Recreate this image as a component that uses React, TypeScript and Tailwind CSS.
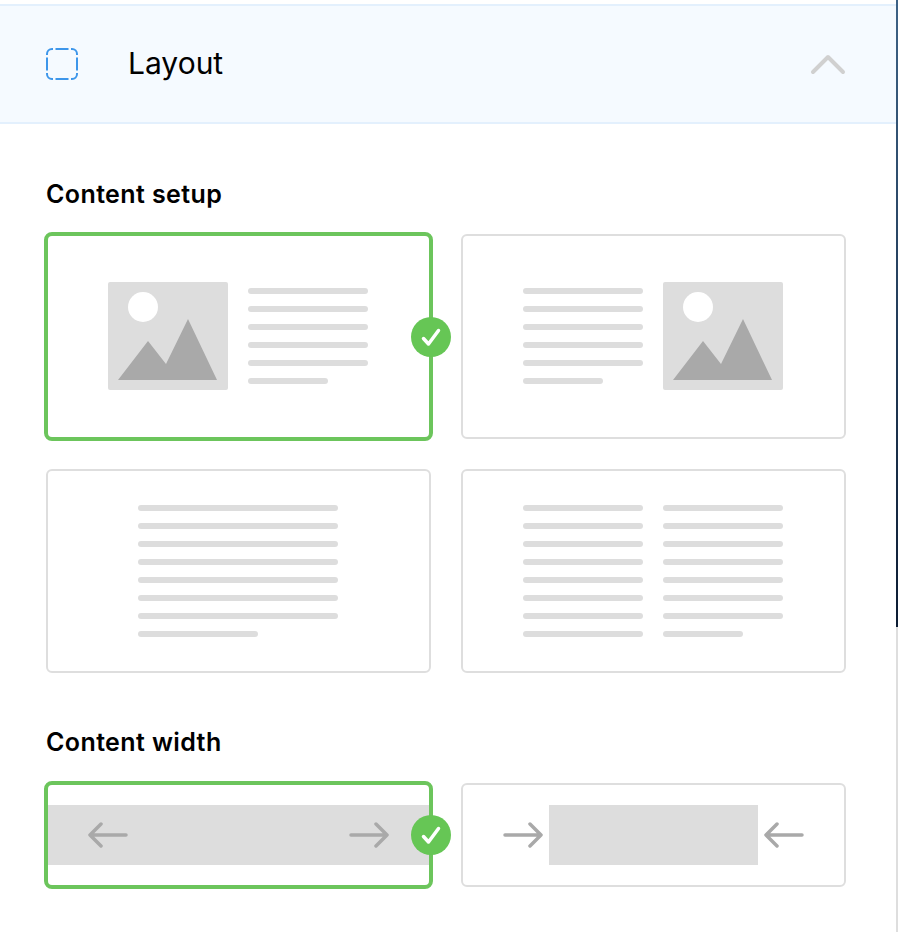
function Check() {
  return (
    <div className="absolute right-[-22px] top-1/2 flex h-10 w-10 -translate-y-1/2 items-center justify-center rounded-full bg-[#66c655]">
      <svg width="22" height="22" viewBox="0 0 22 22" fill="none">
        <path d="M3.5 12.5 L8.5 18 L18.5 4.5" stroke="#fff" strokeWidth="3.5" strokeLinecap="round" strokeLinejoin="round" />
      </svg>
    </div>
  )
}

function Picture() {
  return (
    <svg width="120" height="108" viewBox="0 0 120 108" className="shrink-0">
      <rect width="120" height="108" rx="2" fill="#ddd" />
      <circle cx="35" cy="25" r="15" fill="#fff" />
      <path d="M10 98 L40 59 L58 82 L80 37 L109 98 Z" fill="#a9a9a9" />
    </svg>
  )
}

function Lines({ count, width, last }: { count: number; width: string; last: string }) {
  return (
    <div className={`flex flex-col gap-3 ${width}`}>
      {Array.from({ length: count }).map((_, i) => (
        <div key={i} className={`h-1.5 rounded-full bg-[#ddd] ${i === count - 1 ? last : 'w-full'}`}></div>
      ))}
    </div>
  )
}

function Arrow({ dir }: { dir: 'left' | 'right' }) {
  return (
    <svg width="40" height="26" viewBox="0 0 40 26" fill="none" className="shrink-0">
      {dir === 'left' ? (
        <path d="M38 13 H2 M13 2 L2 13 L13 24" stroke="#a9a9a9" strokeWidth="3.5" strokeLinecap="round" strokeLinejoin="round" />
      ) : (
        <path d="M2 13 H38 M27 2 L38 13 L27 24" stroke="#a9a9a9" strokeWidth="3.5" strokeLinecap="round" strokeLinejoin="round" />
      )}
    </svg>
  )
}

function DashedSquare() {
  return (
    <svg width="32" height="32" viewBox="0 0 32 32" fill="none" stroke="#3d96ea" strokeWidth="2" className="shrink-0">
      <path d="M1 7 V6 A5 5 0 0 1 6 1 H7" />
      <path d="M25 1 H26 A5 5 0 0 1 31 6 V7" />
      <path d="M31 25 V26 A5 5 0 0 1 26 31 H25" />
      <path d="M7 31 H6 A5 5 0 0 1 1 26 V25" />
      <path d="M9.5 1 H22.5 M31 9.5 V22.5 M22.5 31 H9.5 M1 22.5 V9.5" />
    </svg>
  )
}

export default function App() {
  return (
    <div className="relative h-[932px] w-[898px] overflow-hidden bg-white pt-1 font-['Inter',sans-serif] text-black">
      <div className="w-[896px]">
        {/* Header */}
        <div className="flex h-[120px] items-center border-y-2 border-[#e3f0fd] bg-[#f5faff] pl-[46px] pr-[50px]">
          <DashedSquare />
          <span className="ml-[50px] flex-1 pb-0.5 text-[30px] leading-none">Layout</span>
          <svg width="36" height="22" viewBox="0 0 36 22" fill="none">
            <path d="M3 19 L18 4 L33 19" stroke="#d0d0d0" strokeWidth="4" strokeLinecap="round" strokeLinejoin="round" />
          </svg>
        </div>

        <div className="px-[46px]">
          {/* Content setup */}
          <h2 className="mt-[56px] text-[25px] leading-7 font-semibold tracking-[0.4px]">Content setup</h2>
          <div className="mt-[26px] grid grid-cols-[385px_385px] grid-rows-[205px_204px] gap-[30px]">
            <div className="relative -m-0.5 flex items-center gap-5 rounded-lg border-4 border-[#6cc55c] pb-px pl-[60px]">
              <Picture />
              <Lines count={6} width="w-[120px]" last="w-[80px]!" />
              <Check />
            </div>
            <div className="flex items-center gap-5 rounded-md border-2 border-[#dedede] pb-px pl-[60px]">
              <Lines count={6} width="w-[120px]" last="w-[80px]!" />
              <Picture />
            </div>
            <div className="flex items-center rounded-md border-2 border-[#dedede] pl-[90px]">
              <Lines count={8} width="w-[200px]" last="w-[120px]!" />
            </div>
            <div className="flex items-center gap-5 rounded-md border-2 border-[#dedede] pl-[60px]">
              <Lines count={8} width="w-[120px]" last="w-[120px]!" />
              <Lines count={8} width="w-[120px]" last="w-[80px]!" />
            </div>
          </div>

          {/* Content width */}
          <h2 className="mt-[55px] text-[25px] leading-7 font-semibold tracking-[0.4px]">Content width</h2>
          <div className="mt-[27px] grid grid-cols-[385px_385px] grid-rows-[104px] gap-[30px]">
            <div className="relative -m-0.5 flex items-center rounded-lg border-4 border-[#6cc55c]">
              <div className="flex h-[60px] w-full items-center justify-between bg-[#ddd] px-10">
                <Arrow dir="left" />
                <Arrow dir="right" />
              </div>
              <Check />
            </div>
            <div className="flex items-center gap-1.5 rounded-md border-2 border-[#dedede] pl-10">
              <Arrow dir="right" />
              <div className="h-[60px] w-[209px] bg-[#ddd]"></div>
              <Arrow dir="left" />
            </div>
          </div>
        </div>
      </div>

      {/* Edge of the window behind the panel */}
      <div className="absolute top-0 right-0 flex h-full w-0.5 flex-col">
        <div className="h-[627px] bg-linear-to-b from-[#3d6286] to-[#0c1c33]"></div>
        <div className="flex-1 bg-[#dedede]"></div>
      </div>
    </div>
  )
}
